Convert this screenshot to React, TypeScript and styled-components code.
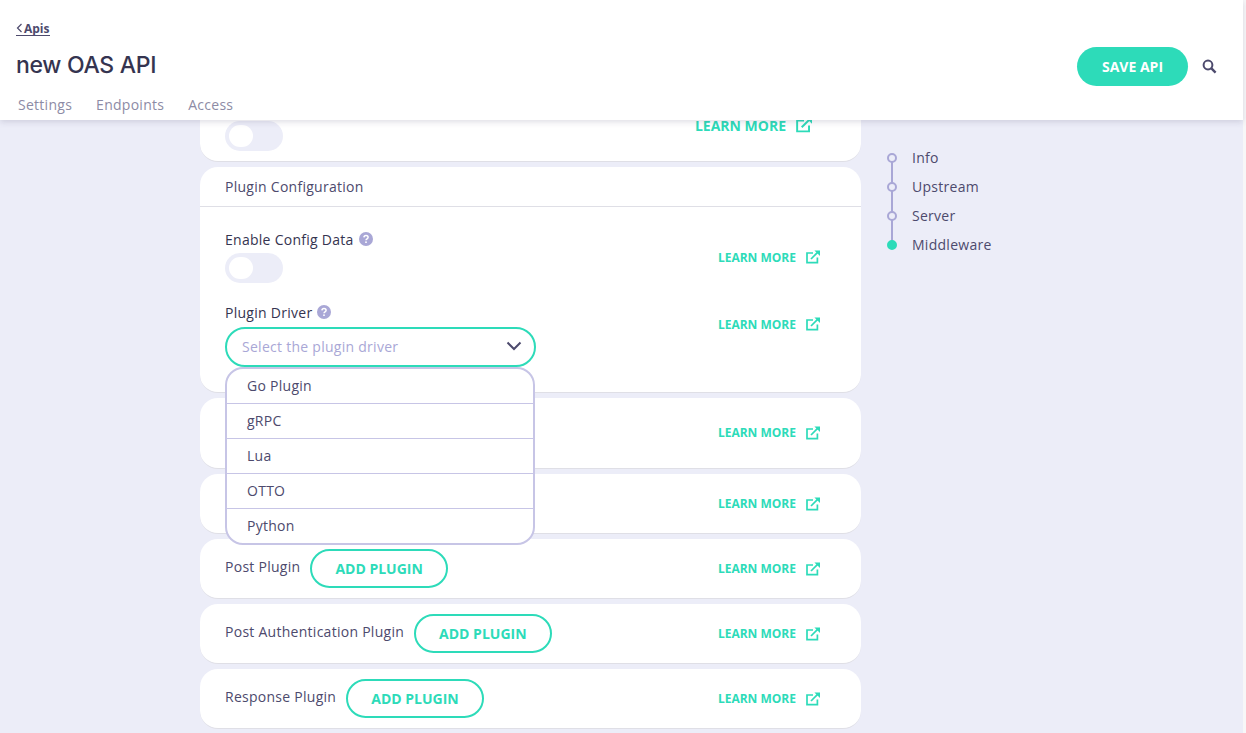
import React from "react";
import styled, { createGlobalStyle } from "styled-components";

const GlobalStyle = createGlobalStyle`
  html, body {
    margin: 0;
    padding: 0;
    height: 100%;
    overflow: hidden;
    background: #f7f7f8;
  }
  #root {
    height: 100%;
  }
  *, *::before, *::after {
    box-sizing: border-box;
  }
`;

const teal = "#2ddbb9";
const ink = "#4d4a6d";
const dark = "#353450";
const lilac = "#a9a7d6";

const Page = styled.div`
  width: 1243px;
  height: 733px;
  display: flex;
  flex-direction: column;
  background: #ecedf8;
  font-family: "Open Sans", "Liberation Sans", sans-serif;
  font-weight: 500;
  letter-spacing: 0.27px;
  color: ${ink};
`;

const Header = styled.header`
  position: relative;
  z-index: 2;
  flex: none;
  height: 120px;
  padding: 21px 26px 0 16px;
  display: flex;
  justify-content: space-between;
  background: #fff;
  box-shadow: 0 2px 6px rgba(77, 74, 109, 0.18);
`;

const TitleBlock = styled.div`
  display: flex;
  flex-direction: column;
`;

const Back = styled.a`
  align-self: flex-start;
  display: flex;
  align-items: center;
  gap: 1px;
  height: 15px;
  font-size: 12px;
  font-weight: 700;
  line-height: 15px;
  letter-spacing: 0;
  color: ${ink};
  border-bottom: 1px solid ${ink};
`;

const Title = styled.h1`
  margin: 13px 0 0;
  font-family: "Inter", "Open Sans", sans-serif;
  font-size: 23px;
  font-weight: 500;
  line-height: 32px;
  letter-spacing: -0.3px;
  color: ${dark};
`;

const Tabs = styled.nav`
  display: flex;
  gap: 24px;
  margin: 14px 0 0 2px;
`;

const Tab = styled.a`
  font-size: 14px;
  line-height: 20px;
  color: #8d8ba5;
`;

const Actions = styled.div`
  display: flex;
  align-items: flex-start;
  gap: 14px;
  padding-top: 26px;
`;

const SaveButton = styled.button`
  width: 111px;
  height: 39px;
  border: 0;
  border-radius: 20px;
  background: ${teal};
  color: #fff;
  font-family: inherit;
  font-size: 14px;
  font-weight: 700;
  letter-spacing: 0;
`;

const SearchIcon = styled.svg`
  width: 15px;
  height: 15px;
  margin-top: 12px;
  color: ${ink};
`;

const Main = styled.main`
  flex: 1;
  min-height: 0;
  overflow: hidden;
  display: flex;
  align-items: flex-start;
  padding-left: 200px;
`;

const Column = styled.div`
  position: relative;
  flex: none;
  width: 661px;
  margin-top: -60px;
  display: flex;
  flex-direction: column;
  gap: 5px;
`;

const Card = styled.section`
  background: #fff;
  border-radius: 18px;
  border-bottom: 1px solid #dfdfe6;
`;

const CardRow = styled.div`
  height: 59px;
  padding: 0 41px 0 25px;
  display: flex;
  align-items: center;
  justify-content: space-between;
`;

const TallRow = styled(CardRow)`
  height: 70px;
  padding-bottom: 1px;
`;

const ClippedRow = styled.div`
  height: 101px;
  padding: 56px 49px 0 25px;
  display: flex;
  align-items: flex-start;
  justify-content: space-between;
`;

const CardHead = styled.h2`
  margin: 0;
  height: 40px;
  padding: 0 25px;
  font-size: 14px;
  font-weight: 500;
  line-height: 40px;
  color: ${ink};
  border-bottom: 1px solid #dfdfe6;
`;

const CardBody = styled.div`
  padding: 20px 41px 0 25px;
  display: flex;
  flex-direction: column;
`;

const Field = styled.div<{ $height: number; $learnTop: number }>`
  height: ${(p) => p.$height}px;
  display: flex;
  justify-content: space-between;
  align-items: flex-start;
  & > a {
    margin-top: ${(p) => p.$learnTop}px;
  }
`;

const Label = styled.div`
  display: flex;
  align-items: center;
  gap: 5px;
  height: 26px;
  padding-bottom: 2px;
  font-size: 14px;
  color: ${dark};
`;

const RowLabel = styled.div`
  display: flex;
  align-items: center;
  gap: 10px;
`;

const RowName = styled.span`
  margin-bottom: 5px;
  font-size: 14px;
  color: ${ink};
`;

const Toggle = styled.div`
  width: 58px;
  height: 30px;
  padding: 4px;
  border-radius: 15px;
  background: #ecedf8;
`;

const ClippedToggle = styled(Toggle)`
  margin-top: 5px;
`;

const Knob = styled.div`
  width: 24px;
  height: 22px;
  border-radius: 11px;
  background: #fff;
`;

const Learn = styled.a<{ $big?: boolean }>`
  display: flex;
  align-items: center;
  gap: 10px;
  height: 18px;
  font-size: ${(p) => (p.$big ? 14 : 12)}px;
  font-weight: 700;
  letter-spacing: 0;
  color: ${teal};
  white-space: nowrap;
`;

const AddButton = styled.button`
  height: 39px;
  padding: 0 23px;
  border: 2px solid ${teal};
  border-radius: 20px;
  background: #fff;
  color: ${teal};
  font-family: inherit;
  font-size: 14px;
  font-weight: 700;
  letter-spacing: 0;
`;

const SelectBox = styled.div`
  width: 311px;
  height: 40px;
  margin-top: 1px;
  padding: 0 12px 2px 15px;
  display: flex;
  align-items: center;
  justify-content: space-between;
  border: 2px solid ${teal};
  border-radius: 20px;
  font-size: 14px;
  color: ${lilac};
`;

const Menu = styled.ul`
  position: absolute;
  z-index: 1;
  left: 25px;
  top: 307px;
  width: 310px;
  margin: 0;
  padding: 0;
  list-style: none;
  background: #fff;
  border: 2px solid #c7c5e6;
  border-radius: 18px;
  overflow: hidden;
`;

const MenuItem = styled.li`
  height: 35px;
  padding: 0 20px;
  font-size: 14px;
  line-height: 34px;
  color: ${ink};
  &:first-child {
    height: 34px;
  }
  & + & {
    border-top: 1px solid #c7c5e6;
  }
`;

const Steps = styled.ol`
  position: relative;
  flex: none;
  width: 200px;
  margin: 23px 0 0 26px;
  padding: 0;
  list-style: none;
  &::before {
    content: "";
    position: absolute;
    left: 4px;
    top: 15px;
    height: 87px;
    width: 2px;
    background: ${lilac};
  }
`;

const Step = styled.li<{ $done?: boolean }>`
  position: relative;
  height: 29px;
  padding-left: 25px;
  display: flex;
  align-items: center;
  font-size: 14px;
  color: ${ink};
  &::before {
    content: "";
    position: absolute;
    left: 0;
    top: 10px;
    width: 10px;
    height: 10px;
    border-radius: 50%;
    background: ${(p) => (p.$done ? teal : "#ecedf8")};
    border: 2px solid ${(p) => (p.$done ? teal : lilac)};
  }
`;

const ExternalIcon = ({ size }: { size: number }) => (
  <svg width={size} height={size} viewBox="0 0 14 14" fill="none" stroke={teal} strokeWidth="1.7">
    <path d="M11.4 7.4v5.2H1V3h6" />
    <path d="M5 9 11.6 2.4" />
    <path d="M8.4.4H14v5.6z" fill={teal} stroke="none" />
  </svg>
);

const HelpIcon = () => (
  <svg width="14" height="14" viewBox="0 0 14 14">
    <circle cx="7" cy="7" r="7" fill={lilac} />
    <path d="M4.9 5.4c.1-1.2 1-1.9 2.1-1.9 1.2 0 2.1.7 2.1 1.8 0 1.6-2.1 1.5-2.1 3" fill="none" stroke="#fff" strokeWidth="1.5" />
    <rect x="6.2" y="9.4" width="1.6" height="1.6" fill="#fff" />
  </svg>
);

const Chevron = () => (
  <svg width="16" height="10" viewBox="0 0 16 10" fill="none" stroke={ink} strokeWidth="2">
    <path d="M1.5 1.5 8 8l6.5-6.5" />
  </svg>
);

const LearnMore = ({ big }: { big?: boolean }) => (
  <Learn $big={big}>
    LEARN MORE
    <ExternalIcon size={big ? 16 : 14} />
  </Learn>
);

const pluginRows = ["Post Plugin", "Post Authentication Plugin", "Response Plugin"];
const drivers = ["Go Plugin", "gRPC", "Lua", "OTTO", "Python"];
const steps = ["Info", "Upstream", "Server", "Middleware"];

export default function App() {
  return (
    <Page>
      <GlobalStyle />
      <Header>
        <TitleBlock>
          <Back>
            <svg width="7" height="10" viewBox="0 0 7 10" fill="none" stroke={ink} strokeWidth="1.2">
              <path d="M5.5 1 1.5 5l4 4" />
            </svg>
            Apis
          </Back>
          <Title>new OAS API</Title>
          <Tabs>
            <Tab>Settings</Tab>
            <Tab>Endpoints</Tab>
            <Tab>Access</Tab>
          </Tabs>
        </TitleBlock>
        <Actions>
          <SaveButton>SAVE API</SaveButton>
          <SearchIcon viewBox="0 0 15 15" fill="none" stroke="currentColor">
            <circle cx="6" cy="6" r="4.4" strokeWidth="2" />
            <path d="m9.4 9.4 4.2 4.2" strokeWidth="2.4" />
          </SearchIcon>
        </Actions>
      </Header>
      <Main>
        <Column>
          <Card>
            <ClippedRow>
              <ClippedToggle>
                <Knob />
              </ClippedToggle>
              <LearnMore big />
            </ClippedRow>
          </Card>
          <Card>
            <CardHead>Plugin Configuration</CardHead>
            <CardBody>
              <Field $height={73} $learnTop={21}>
                <div>
                  <Label>
                    Enable Config Data <HelpIcon />
                  </Label>
                  <Toggle>
                    <Knob />
                  </Toggle>
                </div>
                <LearnMore />
              </Field>
              <Field $height={92} $learnTop={15}>
                <div>
                  <Label>
                    Plugin Driver <HelpIcon />
                  </Label>
                  <SelectBox>
                    Select the plugin driver
                    <Chevron />
                  </SelectBox>
                </div>
                <LearnMore />
              </Field>
            </CardBody>
          </Card>
          <Card>
            <TallRow>
              <span />
              <LearnMore />
            </TallRow>
          </Card>
          <Card>
            <CardRow>
              <span />
              <LearnMore />
            </CardRow>
          </Card>
          {pluginRows.map((name) => (
            <Card key={name}>
              <CardRow>
                <RowLabel>
                  <RowName>{name}</RowName>
                  <AddButton>ADD PLUGIN</AddButton>
                </RowLabel>
                <LearnMore />
              </CardRow>
            </Card>
          ))}
          <Menu>
            {drivers.map((d) => (
              <MenuItem key={d}>{d}</MenuItem>
            ))}
          </Menu>
        </Column>
        <Steps>
          {steps.map((s, i) => (
            <Step key={s} $done={i === steps.length - 1}>
              {s}
            </Step>
          ))}
        </Steps>
      </Main>
    </Page>
  );
}
